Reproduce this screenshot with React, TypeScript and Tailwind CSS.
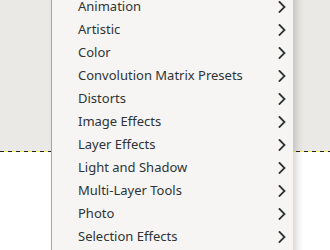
import React from "react";

const items = [
  "Animation",
  "Artistic",
  "Color",
  "Convolution Matrix Presets",
  "Distorts",
  "Image Effects",
  "Layer Effects",
  "Light and Shadow",
  "Multi-Layer Tools",
  "Photo",
  "Selection Effects",
];

function Chevron() {
  return (
    <svg width="8" height="12" viewBox="0 0 8 12" fill="none">
      <path d="M1.5 1 L6.5 6 L1.5 11" stroke="#2e3436" strokeWidth="1.8" strokeLinecap="square" strokeLinejoin="miter" />
    </svg>
  );
}

export default function App() {
  return (
    <div className="relative w-[330px] h-[250px] overflow-hidden bg-white" style={{ fontFamily: '"Noto Sans", "Open Sans", sans-serif' }}>
      <div className="flex flex-col w-full">
        <div className="h-[151px] bg-[#ebe9e6]" />
        <div className="h-[1px] w-full bg-[repeating-linear-gradient(90deg,#222_0px,#222_4px,#f4f060_4px,#f4f060_8px)]" />
        <div className="flex-1 bg-white" />
      </div>
      <div className="absolute left-[51px] top-[-5px] w-[242px] h-[270px] bg-[#f6f5f4] border-l border-[#a9a7a4] shadow-[4px_0_7px_rgba(0,0,0,0.16)]">
        <div className="flex flex-col">
          {items.map((t) => (
            <div key={t} className="flex items-center justify-between h-[23px] pl-[26px] pr-[7px] text-[13px] text-[#2e3436]">
              <span>{t}</span>
              <Chevron />
            </div>
          ))}
        </div>
      </div>
    </div>
  );
}
